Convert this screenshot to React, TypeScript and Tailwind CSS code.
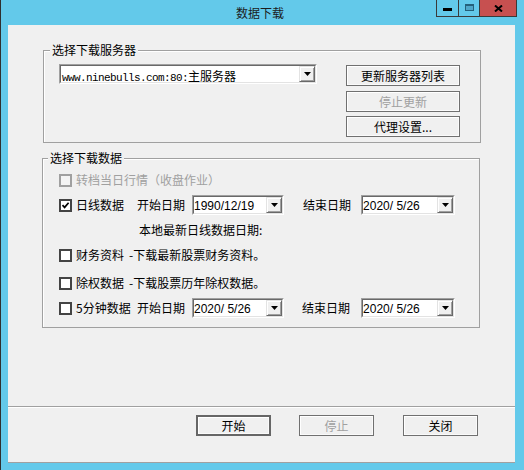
import React from "react";

const cjk = "font-['Noto_Sans_CJK_SC',sans-serif]";

function Checkbox({ checked, disabled }: { checked?: boolean; disabled?: boolean }) {
  return (
    <span
      className={`w-[13px] h-[13px] border-2 flex items-center justify-center shrink-0 ${
        disabled ? "border-[#a0a0a0] bg-[#f4f4f4]" : "border-[#444444] bg-white"
      }`}
    >
      {checked && (
        <svg width="9" height="9" viewBox="0 0 9 9">
          <path d="M1.5 4.2 L3.6 6.4 L7.6 1.8" fill="none" stroke="#000" strokeWidth="1.7" />
        </svg>
      )}
    </span>
  );
}

function DropArrow() {
  return (
    <span className="w-[16px] h-[16px] shrink-0 flex items-center justify-center bg-[#f0f0f0] border border-t-[#e3e3e3] border-l-[#e3e3e3] border-r-[#696969] border-b-[#696969] shadow-[inset_1px_1px_0_#fff,inset_-1px_-1px_0_#a0a0a0]">
      <svg width="7" height="4" viewBox="0 0 7 4">
        <path d="M0 0 H7 L3.5 4 Z" fill="#000" />
      </svg>
    </span>
  );
}

// 下拉框（凹陷边框）
function Combo({ className, children }: { className: string; children: React.ReactNode }) {
  return (
    <div className={`h-[20px] flex border border-t-[#a0a0a0] border-l-[#a0a0a0] border-r-white border-b-white shrink-0 ${className}`}>
      <div className="flex-1 flex items-center bg-white border border-t-[#696969] border-l-[#696969] border-r-[#e3e3e3] border-b-[#e3e3e3] overflow-hidden">
        <div className="flex-1 min-w-0 whitespace-pre">{children}</div>
        <DropArrow />
      </div>
    </div>
  );
}

function DateCombo({ value, className }: { value: string; className: string }) {
  return (
    <Combo className={className}>
      <span className="font-['Liberation_Sans',sans-serif] text-[12px] leading-[14px] text-black">{value}</span>
    </Combo>
  );
}

function Btn({
  children,
  disabled,
  primary,
  className = "",
}: {
  children: React.ReactNode;
  disabled?: boolean;
  primary?: boolean;
  className?: string;
}) {
  return (
    <div
      className={`flex items-center justify-center bg-[#f0f0f0] text-[12px] leading-[14px] shrink-0 ${
        primary ? "border-2 border-[#666666]" : "border border-[#707070]"
      } ${disabled ? "text-[#a0a0a0] border-[#7a7a7a]" : "text-black"} shadow-[inset_1px_1px_0_#fff,inset_-1px_-1px_0_#fafafa] ${className}`}
    >
      {children}
    </div>
  );
}

function Group({ title, className, children }: { title: string; className: string; children: React.ReactNode }) {
  return (
    <div className={`relative border border-[#a0a0a0] shadow-[inset_1px_1px_0_#fff] shrink-0 ${className}`}>
      <span className="absolute -top-[8px] px-[2px] bg-[#f0f0f0] text-[12px] leading-[14px] text-black whitespace-nowrap" style={{ left: title.length === 7 ? 6 : 5 }}>
        {title}
      </span>
      {children}
    </div>
  );
}

export default function App() {
  return (
    <div className={`w-[524px] h-[470px] bg-[#63c9ea] border-l border-[#2f2f2f] flex flex-col ${cjk}`}>
      {/* 标题栏 */}
      <div className="h-[25px] grid grid-cols-[1fr_auto_1fr] shrink-0">
        <div />
        <div className="self-center text-[12px] leading-[14px] text-[#1c1c1c] mr-[5px]">数据下载</div>
        <div className="flex justify-end self-start mr-[7px]">
          <div className="w-[22px] h-[17px] border-l border-b border-[#3a3a3a] flex justify-center">
            <span className="mt-[8px] w-[9px] h-[3px] bg-black" />
          </div>
          <div className="w-[21px] h-[17px] border-l border-b border-[#3a3a3a] flex justify-center">
            <span className="mt-[4px] w-[9px] h-[7px] border border-t-2 border-[#24607a] bg-[#4fa6c8]" />
          </div>
          <div className="w-[38px] h-[17px] border-l border-r border-b border-[#3a3a3a] bg-[#c75050] flex justify-center">
            <svg className="mt-[5px]" width="9" height="7" viewBox="0 0 9 7">
              <path d="M1 0.5 L8 6.5 M8 0.5 L1 6.5" stroke="#000" strokeWidth="2" />
            </svg>
          </div>
        </div>
      </div>

      {/* 客户区 */}
      <div className="ml-[7px] w-[507px] h-[438px] bg-[#f0f0f0] border-b border-[#a0a0a0] flex flex-col text-black">
        <Group title="选择下载服务器" className="mt-[25px] ml-[35px] w-[438px] h-[93px]">
          <div className="flex items-start pt-[13px] pl-[15px]">
            <Combo className="w-[258px]">
              <span className="pl-[1px] font-['Liberation_Mono',monospace] text-[11px] tracking-[-0.6px] leading-[14px]">www.ninebulls.com:80:</span>
              <span className="text-[12px] leading-[14px]">主服务器</span>
            </Combo>
            <div className="ml-[29px] mt-[1px] flex flex-col">
              <Btn className="w-[114px] h-[21px]">更新服务器列表</Btn>
              <Btn disabled className="w-[114px] h-[21px] mt-[5px]">停止更新</Btn>
              <Btn className="w-[114px] h-[21px] mt-[4px]">代理设置...</Btn>
            </div>
          </div>
        </Group>

        <Group title="选择下载数据" className="mt-[15px] ml-[34px] w-[438px] h-[170px]">
          <div className="flex flex-col pt-[11px] pl-[16px] text-[12px] leading-[14px]">
            <div className="h-[20px] flex items-center gap-[4px]">
              <Checkbox disabled />
              <span className="text-[#a0a0a0]">转档当日行情（收盘作业）</span>
            </div>
            <div className="h-[20px] mt-[5px] flex items-center">
              <div className="w-[78px] flex items-center gap-[4px]">
                <Checkbox checked />
                <span>日线数据</span>
              </div>
              <span>开始日期</span>
              <DateCombo value="1990/12/19" className="ml-[7px] w-[92px]" />
              <span className="ml-[19px]">结束日期</span>
              <DateCombo value="2020/ 5/26" className="ml-[10px] w-[94px]" />
            </div>
            <div className="h-[20px] mt-[5px] flex items-center">
              <span className="ml-[80px]">本地最新日线数据日期:</span>
            </div>
            <div className="h-[20px] mt-[5px] flex items-center gap-[4px]">
              <Checkbox />
              <span>财务资料</span>
              <span className="ml-[1px]">-下载最新股票财务资料。</span>
            </div>
            <div className="h-[20px] mt-[8px] flex items-center gap-[4px]">
              <Checkbox />
              <span>除权数据</span>
              <span className="ml-[1px]">-下载股票历年除权数据。</span>
            </div>
            <div className="h-[20px] mt-[5px] flex items-center">
              <div className="w-[78px] flex items-center gap-[4px]">
                <Checkbox />
                <span>5分钟数据</span>
              </div>
              <span>开始日期</span>
              <DateCombo value="2020/ 5/26" className="ml-[7px] w-[92px]" />
              <span className="ml-[18px]">结束日期</span>
              <DateCombo value="2020/ 5/26" className="ml-[11px] w-[94px]" />
            </div>
          </div>
        </Group>

        <div className="mt-[78px] h-[2px] border-t border-[#a0a0a0] bg-white shrink-0" />

        <div className="mt-[7px] pl-[188px] flex">
          <Btn primary className="w-[75px] h-[21px]">开始</Btn>
          <Btn disabled className="w-[75px] h-[21px] ml-[28px]">停止</Btn>
          <Btn className="w-[75px] h-[21px] ml-[29px]">关闭</Btn>
        </div>
      </div>
    </div>
  );
}
